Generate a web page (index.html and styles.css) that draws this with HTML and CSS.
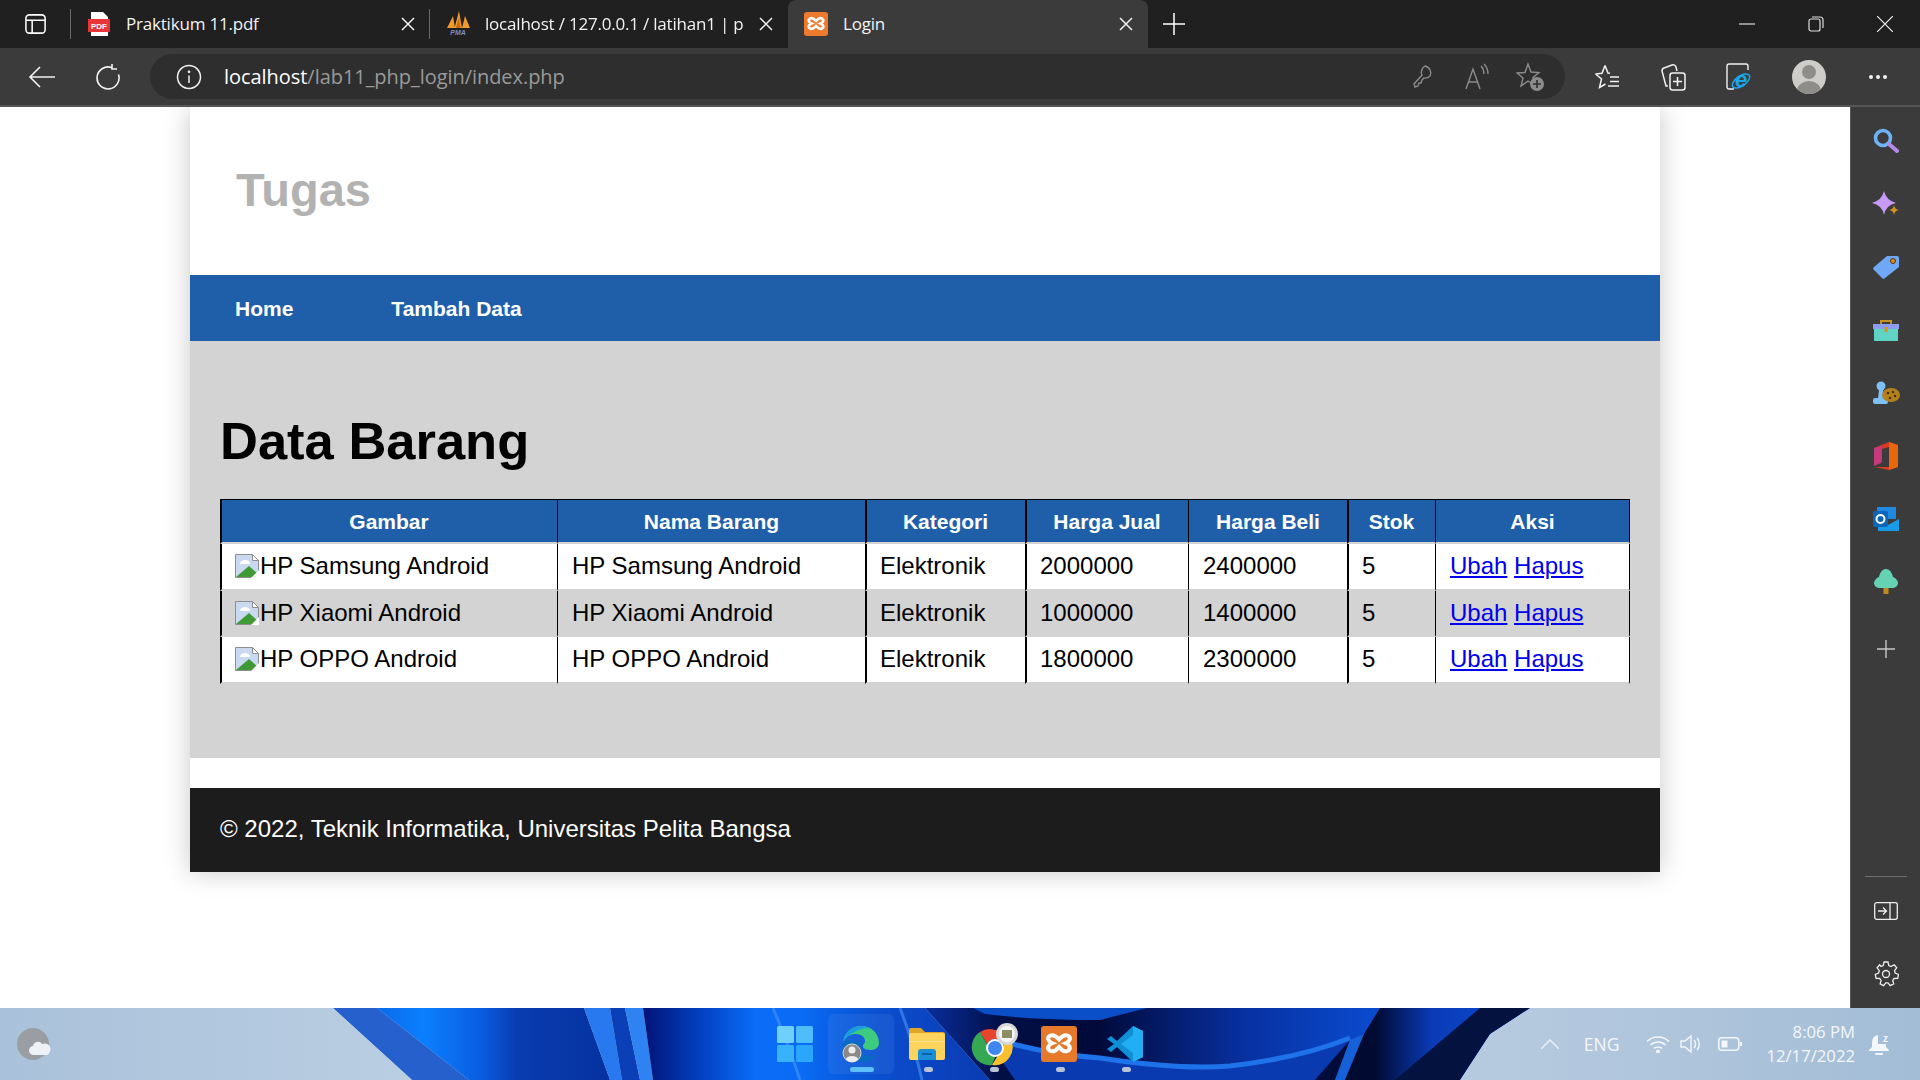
FILE: index.html
```html
<!DOCTYPE html>
<html lang="id">
<head>
    <meta charset="UTF-8">
    <title>Login</title>
    <link rel="stylesheet" href="styles.css">
</head>
<body>
    <div class="tabstrip">
        <div class="tab-menu">
            <svg width="24" height="24" viewBox="0 0 24 24" fill="none" stroke="#fff" stroke-width="1.6"><rect x="2" y="2.500" width="20" height="19" rx="3.500"/><path d="M2 8h20M8.500 8v13.500"/></svg>
        </div>
        <div class="tab tab-pdf">
            <svg class="tab-icon" width="24" height="26" viewBox="0 0 24 26"><path d="M4 1h12l5 5v19H4z" fill="#fff"/><rect x="1" y="8" width="22" height="13" fill="#e8353a"/><text x="12" y="18" class="pdf-label">PDF</text></svg>
            <span class="tab-title">Praktikum 11.pdf</span>
            <span class="tab-close"><svg width="14" height="14" viewBox="0 0 14 14" stroke="#f2f2f2" stroke-width="1.500"><path d="M1 1l12 12M13 1 1 13"/></svg></span>
        </div>
        <div class="tab tab-pma">
            <svg class="tab-icon" width="26" height="26" viewBox="0 0 26 26"><path d="M2 17 8 5l2 12zM9.500 17 14 0l3 17zM17 17l3-12 5 12z" fill="#f29a2e"/><path d="M11 17 14 6l1.500 11z" fill="#c66d12"/><text x="13" y="24" class="pma-label">PMA</text></svg>
            <span class="tab-title tab-title-pma tab-fade">localhost / 127.0.0.1 / latihan1 | p</span>
            <span class="tab-close"><svg width="14" height="14" viewBox="0 0 14 14" stroke="#f2f2f2" stroke-width="1.500"><path d="M1 1l12 12M13 1 1 13"/></svg></span>
        </div>
        <div class="tab tab-active">
            <svg class="tab-icon" width="24" height="24" viewBox="0 0 24 24"><rect width="24" height="24" rx="3" fill="#ee7a2d"/><path d="M6 6.500c3-1.500 4.500 1 6 2.500 1.500-1.500 3-4 6-2.500 2.500 1.500 1 4-1.500 5 2.500 1 4 3.500 1.500 5-3 1.500-4.500-1-6-2.500-1.500 1.500-3 4-6 2.500-2.500-1.500-1-4 1.500-5C5 10.500 3.500 8 6 6.500z" fill="none" stroke="#fff" stroke-width="2.600"/></svg>
            <span class="tab-title">Login</span>
            <span class="tab-close"><svg width="14" height="14" viewBox="0 0 14 14" stroke="#f2f2f2" stroke-width="1.500"><path d="M1 1l12 12M13 1 1 13"/></svg></span>
        </div>
        <div class="new-tab">
            <svg width="22" height="22" viewBox="0 0 22 22" stroke="#fff" stroke-width="1.500"><path d="M11 0v22M0 11h22"/></svg>
        </div>
        <div class="window-controls">
            <span class="win-btn"><svg width="16" height="16" viewBox="0 0 16 16" stroke="#ddd" stroke-width="1.200"><path d="M0 8h16"/></svg></span>
            <span class="win-btn"><svg width="16" height="16" viewBox="0 0 16 16" fill="none" stroke="#ddd" stroke-width="1.200"><rect x="1" y="3" width="11" height="12" rx="2"/><path d="M4 1h8a3 3 0 0 1 3 3v8"/></svg></span>
            <span class="win-btn"><svg width="16" height="16" viewBox="0 0 16 16" stroke="#eee" stroke-width="1.200"><path d="M0 0l16 16M16 0 0 16"/></svg></span>
        </div>
    </div>

    <div class="toolbar">
        <span class="tool-btn"><svg width="28" height="24" viewBox="0 0 28 24" fill="none" stroke="#f2f2f2" stroke-width="1.600"><path d="M27 12H2M12 2 2 12l10 10"/></svg></span>
        <span class="tool-btn"><svg width="26" height="26" viewBox="0 0 26 26" fill="none" stroke="#f2f2f2" stroke-width="1.600"><path d="M16.500 3.500a11 11 0 1 0 7 7M17 0v5h5" /></svg></span>
        <div class="address">
            <span class="info-icon"><svg width="26" height="26" viewBox="0 0 26 26" fill="none" stroke="#f2f2f2" stroke-width="1.500"><circle cx="13" cy="13" r="11.500"/><path d="M13 11.500V19"/><circle cx="13" cy="7.800" r=".6"/></svg></span>
            <span class="url"><span class="url-host">localhost</span>/lab11_php_login/index.php</span>
            <span class="omni-btn"><svg width="22" height="26" viewBox="0 0 22 26" fill="none" stroke="#8c8c8c" stroke-width="1.400"><path d="M13 2a7 7 0 0 1 5 10 7 7 0 0 1-6 2l-2 2-1 3H7l-1 3-3 1-1-3 8-9a7 7 0 0 1 3-9z"/></svg></span>
            <span class="omni-btn"><svg width="26" height="28" viewBox="0 0 26 28" fill="none" stroke="#8c8c8c" stroke-width="1.400"><path d="M2 26 9 6l7 20M4.500 19h9M17 3c2 2 3 5 3 8M20 1c3 3 4 6 4 10"/></svg></span>
            <span class="omni-btn"><svg width="30" height="30" viewBox="0 0 30 30"><path d="M12 2l3 8 8 .5-6 5 2 8-7-4.500L5 24l2-8-6-5 8-.5z" fill="none" stroke="#8c8c8c" stroke-width="1.400"/><circle cx="21" cy="22" r="7" fill="#8c8c8c"/><path d="M21 18v8M17 22h8" stroke="#2e2e2e" stroke-width="1.600"/></svg></span>
        </div>
        <div class="tool-group">
            <span class="tool-btn"><svg width="26" height="26" viewBox="0 0 26 26" fill="none" stroke="#f2f2f2" stroke-width="1.500"><path d="M11 1.500l3 7.500 2 .2M1.500 10l6 5-2 8.500 6-3.500M1.500 10 8 9.300 11 1.500M16 13h9M16 17.500h9M14 22h11"/></svg></span>
            <span class="tool-btn"><svg width="26" height="28" viewBox="0 0 26 28" fill="none" stroke="#f2f2f2" stroke-width="1.500"><rect x="10" y="10" width="15" height="17" rx="2.500"/><path d="M17.500 14v9M13 18.500h9M8 23H6l-4-15a3 3 0 0 1 2-3l8-3a3 3 0 0 1 4 2l1 4"/></svg></span>
            <span class="tool-btn"><svg width="26" height="28" viewBox="0 0 26 28"><path d="M8 26H3a2 2 0 0 1-2-2V3a2 2 0 0 1 2-2h17a2 2 0 0 1 2 2v4" fill="none" stroke="#f2f2f2" stroke-width="1.400"/><ellipse cx="15" cy="18" rx="10" ry="5" transform="rotate(-35 15 18)" fill="none" stroke="#18a8ee" stroke-width="1.400"/><text x="15" y="24" class="ie-label">e</text></svg></span>
            <span class="tool-btn avatar-slot"><svg width="34" height="34" viewBox="0 0 34 34"><clipPath id="avatarClip"><circle cx="17" cy="17" r="17"/></clipPath><circle cx="17" cy="17" r="17" fill="#cfcdc9"/><g clip-path="url(#avatarClip)" fill="#8f8d89"><circle cx="17" cy="12" r="7"/><ellipse cx="17" cy="31" rx="12" ry="10"/></g></svg></span>
            <span class="tool-btn dots-slot"><svg width="20" height="6" viewBox="0 0 20 6" fill="#f2f2f2"><circle cx="3" cy="3" r="2"/><circle cx="10" cy="3" r="2"/><circle cx="17" cy="3" r="2"/></svg></span>
        </div>
    </div>

    <div class="main">
        <div class="viewport">
            <div class="wrapper">
                <header class="site-header"><h1>Tugas</h1></header>
                <nav class="site-nav">
                    <a href="#">Home</a>
                    <a href="#">Tambah Data</a>
                </nav>
                <div class="content">
                    <h2>Data Barang</h2>
                    <table class="data-table">
                        <thead>
                            <tr>
                                <th class="col-img">Gambar</th>
                                <th class="col-name">Nama Barang</th>
                                <th class="col-cat">Kategori</th>
                                <th class="col-sell">Harga Jual</th>
                                <th class="col-buy">Harga Beli</th>
                                <th class="col-stock">Stok</th>
                                <th class="col-act">Aksi</th>
                            </tr>
                        </thead>
                        <tbody>
                            <tr>
                                <td><svg class="broken-img" viewBox="0 0 24 24"><use href="#brokenImg"/></svg>HP Samsung Android</td>
                                <td>HP Samsung Android</td>
                                <td>Elektronik</td>
                                <td>2000000</td>
                                <td>2400000</td>
                                <td>5</td>
                                <td><a href="#">Ubah</a> <a href="#">Hapus</a></td>
                            </tr>
                            <tr>
                                <td><svg class="broken-img" viewBox="0 0 24 24"><use href="#brokenImg"/></svg>HP Xiaomi Android</td>
                                <td>HP Xiaomi Android</td>
                                <td>Elektronik</td>
                                <td>1000000</td>
                                <td>1400000</td>
                                <td>5</td>
                                <td><a href="#">Ubah</a> <a href="#">Hapus</a></td>
                            </tr>
                            <tr>
                                <td><svg class="broken-img" viewBox="0 0 24 24"><use href="#brokenImg"/></svg>HP OPPO Android</td>
                                <td>HP OPPO Android</td>
                                <td>Elektronik</td>
                                <td>1800000</td>
                                <td>2300000</td>
                                <td>5</td>
                                <td><a href="#">Ubah</a> <a href="#">Hapus</a></td>
                            </tr>
                        </tbody>
                    </table>
                </div>
                <footer class="site-footer">&copy; 2022, Teknik Informatika, Universitas Pelita Bangsa</footer>
            </div>
        </div>

        <aside class="sidebar">
            <span class="side-btn"><svg width="26" height="26" viewBox="0 0 26 26" fill="none"><circle cx="10" cy="10" r="7.500" stroke="#6db3f5" stroke-width="3.600"/><path d="M16 16l8 7" stroke="#b58be8" stroke-width="4" stroke-linecap="round"/></svg></span>
            <span class="side-btn"><svg width="28" height="26" viewBox="0 0 28 26"><path d="M12 0Q14 9 24 12 14 14 12 24 10 14 0 12 10 9 12 0z" fill="#c79bf5"/><path d="M22 14c.5 3 2 4.500 5 5-3 .5-4.500 2-5 5-.5-3-2-4.500-5-5 3-.5 4.500-2 5-5z" fill="#d3951f"/></svg></span>
            <span class="side-btn"><svg width="26" height="24" viewBox="0 0 26 24"><path d="M14 1h10a2 2 0 0 1 2 2v9L12 23a2 2 0 0 1-3 0L1 15a2 2 0 0 1 0-3z" fill="#6fa8f7"/><circle cx="20" cy="6" r="2.500" fill="#e08a12" stroke="#5a3a10"/></svg></span>
            <span class="side-btn"><svg width="26" height="22" viewBox="0 0 26 22"><path d="M8 6V2h10v4" fill="none" stroke="#c49326" stroke-width="2"/><rect x="0" y="5" width="26" height="5" fill="#8e9cf0"/><rect x="1" y="10" width="24" height="12" fill="#5fd3c4"/><rect x="11.500" y="8" width="3" height="5" fill="#d3951f"/></svg></span>
            <span class="side-btn"><svg width="28" height="24" viewBox="0 0 28 24"><circle cx="9" cy="5" r="4.500" fill="#7cc0f5"/><path d="M7 9h4l1 8H6z" fill="#7cc0f5"/><rect x="1" y="17" width="15" height="6" rx="2" fill="#7cc0f5"/><ellipse cx="19" cy="14" rx="9" ry="7" fill="#b5801e"/><g fill="#4a3410"><circle cx="16" cy="12" r="1.300"/><circle cx="21" cy="11" r="1.300"/><circle cx="23" cy="15" r="1.300"/><circle cx="18" cy="17" r="1.300"/></g></svg></span>
            <span class="side-btn"><svg width="24" height="28" viewBox="0 0 24 28"><path d="M15 0l9 3v22l-9 3-15-3 15 0V5L8 7v13l-8 3V6z" fill="#d83b23"/><path d="M15 0l9 3v22l-9 3z" fill="#e8670c"/><path d="M0 6l7-2v17l-7 3z" fill="#c43a7c"/></svg></span>
            <span class="side-btn"><svg width="26" height="24" viewBox="0 0 26 24"><rect x="4" y="0" width="19" height="12" fill="#1f8ae0"/><path d="M5 12l10 6 11-6v12H5z" fill="#1a9be8"/><rect x="0" y="4" width="15" height="16" rx="2" fill="#0a66b8"/><circle cx="7.500" cy="12" r="4" fill="none" stroke="#fff" stroke-width="2"/></svg></span>
            <span class="side-btn"><svg width="24" height="26" viewBox="0 0 24 26"><path d="M12 0c4 0 6 4 7 8 3 1 5 4 5 6 0 3-3 5-6 5H6c-3 0-6-2-6-5 0-2 2-5 5-6 1-4 3-8 7-8z" fill="#65d2b4"/><rect x="9.500" y="19" width="5" height="6" fill="#c08a1e"/></svg></span>
            <span class="side-btn side-add"><svg width="18" height="18" viewBox="0 0 18 18" stroke="#c8c8c8" stroke-width="1.400"><path d="M9 0v18M0 9h18"/></svg></span>
            <span class="side-spacer"></span>
            <span class="side-line"></span>
            <span class="side-btn"><svg width="24" height="18" viewBox="0 0 24 18" fill="none" stroke="#eee" stroke-width="1.300"><rect x=".7" y=".7" width="22.600" height="16.600" rx="2"/><path d="M16 1v16M4 9h8M9 5.500 12.500 9 9 12.500"/></svg></span>
            <span class="side-btn"><svg width="26" height="26" viewBox="0 0 26 26" fill="none" stroke="#eee" stroke-width="1.300"><circle cx="13" cy="13" r="3.500"/><path d="M11 1h4l.8 3.500 2.200 1 3.200-1.700 2.500 3-2.200 2.800.7 2.400 3.300 1.500v0l-.8 3.800-3.600.2-1.400 2 1 3.400-3.500 1.700-2.200-2.800h-2.200l-2.200 2.800-3.500-1.700 1-3.400-1.400-2-3.600-.2-.8-3.800 3.300-1.500.7-2.400-2.200-2.800 2.500-3L8 5.500l2.200-1z"/></svg></span>
        </aside>
    </div>

    <div class="taskbar">
        <svg class="wallpaper" viewBox="0 0 1920 72" width="1920" height="72">
            <defs>
                <clipPath id="wallClip"><path d="M333 0 412 72H1460L1490 26 1530 0z"/></clipPath>
                <linearGradient id="wallA" gradientUnits="userSpaceOnUse" x1="377" y1="0" x2="610" y2="0">
                    <stop offset="0" stop-color="#0a6ae8"/>
                    <stop offset=".2" stop-color="#0a80ff"/>
                    <stop offset=".45" stop-color="#0a5ce0"/>
                    <stop offset=".6" stop-color="#0a3cb0"/>
                    <stop offset="1" stop-color="#0532a0"/>
                </linearGradient>
                <linearGradient id="wallB" gradientUnits="userSpaceOnUse" x1="645" y1="0" x2="990" y2="0">
                    <stop offset="0" stop-color="#02157a"/>
                    <stop offset=".16" stop-color="#0340c0"/>
                    <stop offset=".32" stop-color="#0a6df8"/>
                    <stop offset=".45" stop-color="#0a6cf5"/>
                    <stop offset=".62" stop-color="#0a56d8"/>
                    <stop offset=".75" stop-color="#0b49c8"/>
                    <stop offset="1" stop-color="#0a3ab0"/>
                </linearGradient>
                <linearGradient id="wallC" gradientUnits="userSpaceOnUse" x1="925" y1="0" x2="1380" y2="0">
                    <stop offset="0" stop-color="#0a2ea0"/>
                    <stop offset=".17" stop-color="#020f45"/>
                    <stop offset=".38" stop-color="#010a3a"/>
                    <stop offset=".7" stop-color="#0830a0"/>
                    <stop offset="1" stop-color="#0a4cd0"/>
                </linearGradient>
                <linearGradient id="wallD" gradientUnits="userSpaceOnUse" x1="1375" y1="0" x2="1490" y2="0">
                    <stop offset="0" stop-color="#010a30"/>
                    <stop offset=".5" stop-color="#0a3bb8"/>
                    <stop offset="1" stop-color="#0a46c8"/>
                </linearGradient>
                <symbol id="brokenImg" viewBox="0 0 24 24">
                    <path d="M.5.5h17l6 6v17H.5z" fill="#c9daf0" stroke="#8e8e8e"/>
                    <path d="M1 23 14 12l9 8v3z" fill="#3f9a35"/>
                    <path d="M5 10c0-3 3-4 5-4s5 1 5 4z" fill="#fff"/>
                    <path d="M17.500.5v6h6z" fill="#fff" stroke="#8e8e8e"/>
                    <path d="M16 24l8-8v8z" fill="#fff"/>
                </symbol>
            </defs>
            <g clip-path="url(#wallClip)">
                <path d="M333 0H377L469 72H412z" fill="#2560cc"/>
                <path d="M377 0H584L610 72H469z" fill="url(#wallA)"/>
                <path d="M584 0H610L622 72H610z" fill="#2878f0"/>
                <path d="M610 0H625L640 72H622z" fill="#0a3fb8"/>
                <path d="M625 0H643L653 72H640z" fill="#2f82f2"/>
                <path d="M643 0H925L990 72H653z" fill="url(#wallB)"/>
                <path d="M773 0Q790 40 800 72M900 0Q915 40 922 72" fill="none" stroke="#4a94fa" stroke-width="3" opacity=".6"/>
                <path d="M925 0H1530L1490 26 1460 72H990z" fill="url(#wallC)"/>
                <path d="M973 0H1147L1100 12Q1030 12 985 6z" fill="#0a4ec8"/>
                <path d="M985 28Q1040 46 1100 50 1180 62 1230 58 1300 50 1350 30L1335 72H1015z" fill="#0a3ab0"/>
                <path d="M985 28Q1040 46 1100 50 1180 62 1230 58 1300 50 1350 30" fill="none" stroke="#1f73ea" stroke-width="5"/>
                <path d="M1350 32 1315 72H1335z" fill="#020c3a"/>
                <path d="M1350 32 1364 26 1345 72H1335z" fill="#1660d8"/>
                <path d="M1380 0 1364 26 1345 72H1530V0z" fill="url(#wallD)"/>
                <path d="M1480 0H1530L1490 26 1460 72H1395z" fill="#03123f"/>
            </g>
        </svg>
        <span class="weather"><svg width="36" height="32" viewBox="0 0 36 32"><circle cx="16" cy="16" r="16" fill="#9a9ea3"/><path d="M19 27h-2a4.500 4.500 0 0 1-1-9 5 5 0 0 1 9-2 5.500 5.500 0 0 1 5 11z" fill="#eef2f6"/></svg></span>
        <div class="task-apps">
            <span class="task-app"><svg width="36" height="36" viewBox="0 0 36 36"><rect width="17" height="17" rx="1.500" fill="#6fd0fc"/><rect x="19" width="17" height="17" rx="1.500" fill="#4fbdf9"/><rect y="19" width="17" height="17" rx="1.500" fill="#38b2fa"/><rect x="19" y="19" width="17" height="17" rx="1.500" fill="#2aa6fa"/></svg></span>
            <span class="task-app task-app-open"><svg width="38" height="38" viewBox="0 0 38 38"><path d="M1 17C3 6 11 1 19 1c10 0 18 7 18 17 0 4-3 7-8 7-4 0-8-1-8-4 0-2 2-2 2-5 0-4-4-7-9-7S4 11 1 17z" fill="#3ccb7f"/><path d="M1 17C3 6 11 1 19 1c4 0 7 1 9 2C19 3 8 7 1 17z" fill="#1b9de2"/><path d="M1 17c-1 11 8 20 18 20 6 0 11-2 15-7-6 2-12 1-15-3-3-3-2-7 1-9-7-3-16-3-19-1z" fill="#0a6cc0"/><circle cx="10" cy="28" r="9" fill="#8a8a8a" stroke="#d6d6d6"/><circle cx="10" cy="25" r="3.500" fill="#eee"/><ellipse cx="10" cy="34" rx="6" ry="3" fill="#eee"/></svg></span>
            <span class="task-app"><svg width="36" height="32" viewBox="0 0 36 32"><path d="M0 2a2 2 0 0 1 2-2h10l4 4h18a2 2 0 0 1 2 2v6H0z" fill="#e0a526"/><rect y="5" width="36" height="27" rx="2" fill="#fcd35c"/><path d="M0 14h36v-1H0z" fill="#fde28e"/><path d="M9 32V24a3 3 0 0 1 3-3h12a3 3 0 0 1 3 3v8z" fill="#1a8fd8"/><rect x="13" y="25" width="10" height="2" fill="#0b5fa5"/></svg></span>
            <span class="task-app"><svg width="50" height="44" viewBox="0 0 50 44"><g transform="translate(9 0)"><path d="M18 8a18 18 0 0 1 15.600 9H18a9 9 0 0 0-8 5L3 10A18 18 0 0 1 18 8z" fill="#e8452f"/><path d="M3 10l8 14a9 9 0 0 0 10 4l-6 15A18 18 0 0 1 3 10z" fill="#34a853"/><path d="M33.600 17A18 18 0 0 1 15 43l8-13a9 9 0 0 0 2-13z" fill="#fbc02d"/><circle cx="18" cy="26" r="8" fill="#3f86f0" stroke="#fff" stroke-width="2"/><circle cx="30" cy="12" r="11" fill="#d8d8d8"/><circle cx="30" cy="12" r="8" fill="#f5f5f5"/><rect x="25" y="8" width="10" height="8" fill="#8c8f63"/></g></svg></span>
            <span class="task-app"><svg width="36" height="36" viewBox="0 0 24 24"><rect width="24" height="24" rx="2" fill="#e67a2c"/><path d="M6 6.500c3-1.500 4.500 1 6 2.500 1.500-1.500 3-4 6-2.500 2.500 1.500 1 4-1.500 5 2.500 1 4 3.500 1.500 5-3 1.500-4.500-1-6-2.500-1.500 1.500-3 4-6 2.500-2.500-1.500-1-4 1.500-5C5 10.500 3.500 8 6 6.500z" fill="none" stroke="#fff" stroke-width="2.600"/></svg></span>
            <span class="task-app"><svg width="36" height="36" viewBox="0 0 36 36"><path d="M26 0l10 5v26l-10 5-16-15-6 5-4-3 7-5-7-5 4-3 6 5z" fill="#0f8fd6"/><path d="M26 0l10 5v26l-10 5zM26 9 14 18l12 9z" fill="#22aef5"/></svg></span>
            <i class="task-pill pill-open"></i>
            <i class="task-pill pill-folder"></i>
            <i class="task-pill pill-chrome"></i>
            <i class="task-pill pill-xampp"></i>
            <i class="task-pill pill-code"></i>
        </div>
        <div class="tray">
            <svg width="18" height="10" viewBox="0 0 18 10" fill="none" stroke="#eef3f8" stroke-width="1.300"><path d="M0 10l9-9 9 9"/></svg>
            <span class="tray-lang">ENG</span>
            <svg class="tray-wifi" width="24" height="18" viewBox="0 0 24 18" fill="none" stroke="#f4f7fa" stroke-width="1.600"><path d="M1 6.500c6-6 16-6 22 0M4.500 10c4-4 11-4 15 0M8 13.500c2-2 6-2 8 0"/><circle cx="12" cy="16.500" r="1.200" fill="#f4f7fa"/></svg>
            <svg class="tray-sound" width="24" height="20" viewBox="0 0 24 20" fill="none" stroke="#f4f7fa" stroke-width="1.400"><path d="M1 7v6h4l6 5V2L5 7zM14 6c2 2 2 6 0 8M17 4c3 3 3 9 0 12"/></svg>
            <svg class="tray-battery" width="24" height="14" viewBox="0 0 24 14"><rect x=".8" y=".8" width="20" height="12.400" rx="3" fill="none" stroke="#f4f7fa" stroke-width="1.500"/><rect x="3.500" y="3.500" width="6" height="7" fill="#f4f7fa"/><rect x="22" y="5" width="2" height="4" fill="#f4f7fa"/></svg>
            <div class="clock"><span>8:06 PM</span><span>12/17/2022</span></div>
            <svg class="tray-bell" width="22" height="24" viewBox="0 0 22 24"><path d="M9 3a7 7 0 0 0-6 7v5l-3 3v1h20v-1l-3-3v-3H9z" fill="#f4f7fa"/><rect x="6" y="21" width="8" height="2" rx="1" fill="#f4f7fa"/><text x="14" y="10" class="bell-z">z</text></svg>
        </div>
    </div>
</body>
</html>
```

FILE: styles.css
```css
* { box-sizing: border-box; }
html, body { margin: 0; height: 100%; }
body { width: 1920px; height: 1080px; overflow: hidden; display: flex; flex-direction: column; font-family: "Liberation Sans", Arial, sans-serif; background: #fff; }

/* tab strip */
.tabstrip { height: 48px; background: #202020; display: flex; align-items: stretch; color: #f2f2f2; font-family: "Open Sans", sans-serif; font-size: 17px; }
.tab-menu { width: 71px; padding-left: 24px; display: flex; align-items: center; }
.tab-menu::after { content: ""; width: 1px; height: 30px; background: #6a6a6a; margin-left: 23px; }
.tab { display: flex; align-items: center; position: relative; }
.tab-pdf { width: 359px; padding-left: 16px; }
.tab-pdf::after { content: ""; width: 1px; height: 30px; background: #6a6a6a; position: absolute; right: 0; }
.tab-pma { width: 358px; padding-left: 15px; }
.tab-active { width: 360px; padding-left: 16px; background: #3b3b3b; border-radius: 8px 8px 0 0; }
.tab-icon { flex: none; }
.tab-title { margin-left: 15px; padding-bottom: 2px; white-space: nowrap; flex: 1; letter-spacing: -.2px; }
.tab-title-pma { margin-left: 14px; }
.tab-fade { -webkit-mask-image: linear-gradient(to right, #000 88%, #555 93%, #333 100%); mask-image: linear-gradient(to right, #000 88%, #555 93%, #333 100%); }
.tab-close { width: 16px; margin-right: 14px; display: flex; justify-content: center; flex: none; }
.pdf-label { font: bold 8px "Liberation Sans", sans-serif; fill: #fff; text-anchor: middle; }
.pma-label { font: italic bold 7px "Liberation Sans", sans-serif; fill: #7c8cc0; text-anchor: middle; }
.new-tab { width: 52px; display: flex; align-items: center; justify-content: center; }
.window-controls { margin-left: auto; display: flex; align-items: center; padding-right: 1px; }
.win-btn { width: 69px; display: flex; justify-content: center; }

/* toolbar */
.toolbar { height: 59px; background: #3b3b3b; border-bottom: 2px solid #565656; display: flex; align-items: center; padding-left: 9px; }
.tool-btn { width: 66px; height: 45px; display: flex; align-items: center; justify-content: center; flex: none; }
.address { flex: 1; height: 45px; margin-left: 9px; background: #2e2e2e; border-radius: 23px; display: flex; align-items: center; padding: 0 7px 0 26px; }
.info-icon { display: flex; margin-right: 22px; }
.url { flex: 1; font-family: "Open Sans", sans-serif; font-size: 20px; color: #9a9a9a; letter-spacing: -.05px; }
.url-host { color: #fff; }
.omni-btn { width: 54px; display: flex; justify-content: center; }
.tool-group { display: flex; margin-left: 9px; padding-right: 10px; }
.ie-label { font: italic bold 22px "Liberation Sans", sans-serif; fill: #18a8ee; text-anchor: middle; }
.avatar-slot { width: 74px; }
.dots-slot { width: 64px; }

/* page */
.main { flex: 1; display: flex; min-height: 0; }
.viewport { flex: 1; background: #fff; overflow: hidden; }
.wrapper { width: 1470px; margin: 0 auto; background: #fff; box-shadow: 0 0 25px rgba(0, 0, 0, .22); color: #000; }
.site-header { padding: 56px 46px; height: 168px; }
.site-header h1 { margin: 0; font-size: 47px; line-height: 54px; color: #b2b2b2; }
.site-nav { height: 66px; background: #1f5faa; display: flex; align-items: center; gap: 8px; padding-top: 2px; }
.site-nav a { padding: 0 45px; color: #fff; font-size: 21px; font-weight: bold; text-decoration: none; }
.content { background: #d3d3d3; padding: 70px 30px 74px; }
.content h2 { margin: 0 0 28px; font-size: 52.500px; line-height: 60px; }

.data-table { width: 1410px; table-layout: fixed; border-collapse: separate; border-spacing: 0; font-size: 24px; }
.data-table th { height: 45px; background: #1f5faa; color: #fff; font-size: 21px; text-align: center; padding: 2px 14px 0; border-top: 1px solid #000; border-bottom: 2px solid #d3d3d3; border-left: 1px solid #000; }
.data-table td { height: 46.500px; padding: 0 14px; background: #fff; border-left: 1px solid #000; border-bottom: 2px solid #d3d3d3; white-space: nowrap; }
.data-table tbody tr:nth-child(even) td { background: #d3d3d3; }
.data-table th:nth-child(1), .data-table td:nth-child(1),
.data-table th:nth-child(3), .data-table td:nth-child(3),
.data-table th:nth-child(4), .data-table td:nth-child(4),
.data-table th:nth-child(6), .data-table td:nth-child(6) { border-left-width: 2px; padding-left: 13px; }
.data-table th:last-child, .data-table td:last-child { border-right: 1px solid #000; }
.data-table a { color: #0000ee; }
.col-img { width: 337px; }
.col-name { width: 308px; }
.col-cat { width: 160px; }
.col-sell { width: 163px; }
.col-buy { width: 159px; }
.col-stock { width: 88px; }
.col-act { width: 195px; }
.broken-img { width: 24px; height: 24px; margin-right: 1px; vertical-align: -4px; }

.site-footer { margin-top: 30px; height: 84px; background: #1c1c1c; color: #fff; font-size: 24px; padding: 0 30px 2px; display: flex; align-items: center; }

/* edge sidebar */
.sidebar { width: 70px; background: #3b3b3b; border-left: 1px solid #555; display: flex; flex-direction: column; align-items: center; padding: 2px 0 3px; }
.side-btn { width: 44px; height: 63px; display: flex; align-items: center; justify-content: center; flex: none; }
.side-add { margin-top: 4px; }
.side-spacer { flex: 1; }
.side-line { width: 42px; height: 1px; background: #6e6e6e; margin-bottom: 2px; }

/* windows taskbar */
.taskbar { height: 72px; position: relative; background: linear-gradient(to right, #a9c1da 0, #bcd0e3 25%, #b6cadf 78%, #a3bdd6 100%); display: flex; align-items: center; }
.wallpaper { position: absolute; left: 0; top: 0; }
.weather { position: relative; margin-left: 17px; display: flex; }
.task-apps { position: absolute; left: 762px; top: 0; height: 72px; display: flex; align-items: center; }
.task-app { width: 66px; height: 60px; margin-top: -1px; display: flex; align-items: center; justify-content: center; border-radius: 6px; }
.task-app-open { background: rgba(255, 255, 255, .06); }
.task-pill { position: absolute; top: 59px; width: 9px; height: 5px; border-radius: 3px; background: #b8c3d8; }
.pill-open { left: 88px; width: 24px; background: #5cc0ff; }
.pill-folder { left: 162px; }
.pill-chrome { left: 228px; }
.pill-xampp { left: 294px; }
.pill-code { left: 360px; }
.tray { margin-left: auto; position: relative; display: flex; align-items: center; color: #f4f7fa; font-family: "Open Sans", sans-serif; padding-right: 29px; }
.tray-lang { margin: 0 27px 0 25px; font-size: 17.500px; }
.tray-sound { margin-left: 10px; }
.tray-battery { margin-left: 14px; }
.clock { margin-left: 24px; display: flex; flex-direction: column; align-items: flex-end; font-size: 16.700px; line-height: 24px; }
.tray-bell { margin-left: 14px; }
.bell-z { font: bold 10px "Liberation Sans", sans-serif; fill: #f4f7fa; }
```
